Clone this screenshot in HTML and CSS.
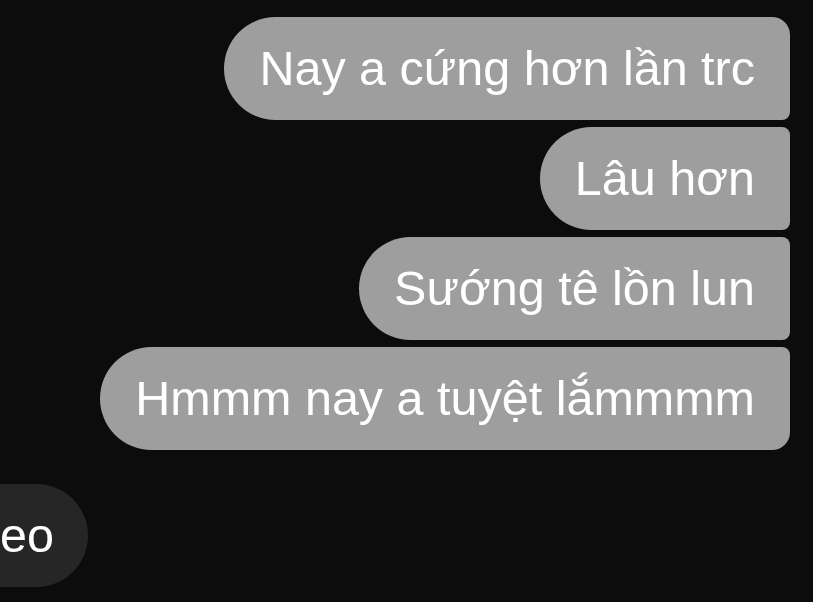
FILE: index.html
```html
<!DOCTYPE html>
<html lang="vi">
<head>
<meta charset="utf-8">
<link rel="stylesheet" href="styles.css">
</head>
<body>
<div class="chat">
  <div class="bubble out first">Nay a cứng hơn lần trc</div>
  <div class="bubble out mid">Lâu hơn</div>
  <div class="bubble out mid">Sướng tê lồn lun</div>
  <div class="bubble out last">Hmmm nay a tuyệt lắmmmm</div>
  <div class="bubble in">eo</div>
</div>
</body>
</html>
```

FILE: styles.css
```css
html, body {
  margin: 0;
  padding: 0;
  background: #0c0c0c;
  width: 813px;
  height: 602px;
  overflow: hidden;
}
.chat {
  display: flex;
  flex-direction: column;
  align-items: flex-end;
  gap: 7px;
  padding: 17px 23px 0 0;
  font-family: "Liberation Sans", Arial, sans-serif;
}
.bubble {
  height: 103px;
  box-sizing: border-box;
  display: flex;
  align-items: center;
  padding: 0 35px 2px;
  font-size: 48.5px;
  color: #ffffff;
  white-space: nowrap;
}
.out {
  background: #9e9e9e;
  border-radius: 52px 8px 8px 52px;
}
.out.first {
  border-radius: 52px 18px 8px 52px;
}
.out.last {
  border-radius: 52px 8px 18px 52px;
}
.in {
  align-self: flex-start;
  background: #262626;
  border-radius: 52px;
  margin-top: 27px;
  margin-left: -60px;
  padding: 0 34px 2px 60px;
}
```
